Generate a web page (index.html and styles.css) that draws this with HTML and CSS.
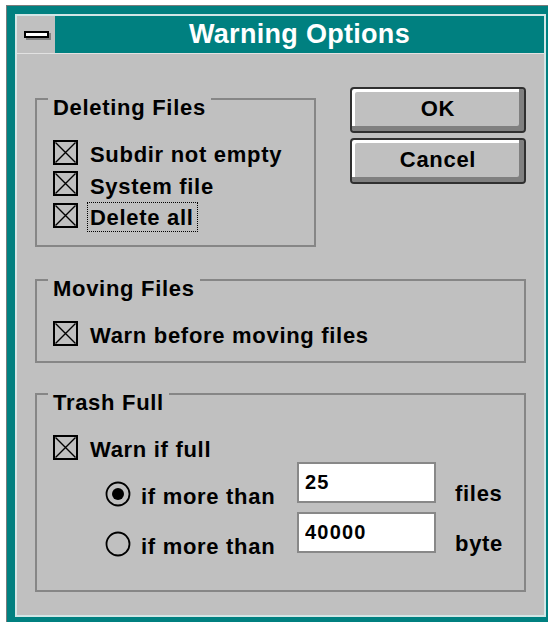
FILE: index.html
```html
<!DOCTYPE html>
<html lang="en">
<head>
<meta charset="utf-8">
<title>Warning Options</title>
<link rel="stylesheet" href="styles.css">
</head>
<body>
<div class="window">
  <div class="frame">
    <div class="titlebar">
      <div class="sysmenu"><span class="sysmenu-bar"></span></div>
      <div class="title">Warning Options</div>
    </div>
    <div class="client">
      <div class="top-row">
        <div class="group group-delete">
          <div class="group-title">Deleting Files</div>
          <div class="checks">
            <div class="check-row">
              <svg class="checkbox" viewBox="0 0 25 25"><rect x="1" y="1" width="23" height="23" fill="none" stroke="#000" stroke-width="2"/><path d="M2.5 2.5L22.5 22.5M22.5 2.5L2.5 22.5" stroke="#000" stroke-width="1.4"/></svg>
              <span class="check-text">Subdir not empty</span>
            </div>
            <div class="check-row">
              <svg class="checkbox" viewBox="0 0 25 25"><rect x="1" y="1" width="23" height="23" fill="none" stroke="#000" stroke-width="2"/><path d="M2.5 2.5L22.5 22.5M22.5 2.5L2.5 22.5" stroke="#000" stroke-width="1.4"/></svg>
              <span class="check-text">System file</span>
            </div>
            <div class="check-row">
              <svg class="checkbox" viewBox="0 0 25 25"><rect x="1" y="1" width="23" height="23" fill="none" stroke="#000" stroke-width="2"/><path d="M2.5 2.5L22.5 22.5M22.5 2.5L2.5 22.5" stroke="#000" stroke-width="1.4"/></svg>
              <span class="check-text"><span class="focus">Delete all</span></span>
            </div>
          </div>
        </div>
        <div class="buttons">
          <div class="btn">OK</div>
          <div class="btn">Cancel</div>
        </div>
      </div>

      <div class="group group-move">
        <div class="group-title">Moving Files</div>
        <div class="checks">
          <div class="check-row">
            <svg class="checkbox" viewBox="0 0 25 25"><rect x="1" y="1" width="23" height="23" fill="none" stroke="#000" stroke-width="2"/><path d="M2.5 2.5L22.5 22.5M22.5 2.5L2.5 22.5" stroke="#000" stroke-width="1.4"/></svg>
            <span class="check-text">Warn before moving files</span>
          </div>
        </div>
      </div>

      <div class="group group-trash">
        <div class="group-title">Trash Full</div>
        <div class="checks">
          <div class="check-row">
            <svg class="checkbox" viewBox="0 0 25 25"><rect x="1" y="1" width="23" height="23" fill="none" stroke="#000" stroke-width="2"/><path d="M2.5 2.5L22.5 22.5M22.5 2.5L2.5 22.5" stroke="#000" stroke-width="1.4"/></svg>
            <span class="check-text">Warn if full</span>
          </div>
        </div>
        <div class="limits">
          <div class="radio-row">
            <svg class="radio" viewBox="0 0 26 26"><circle cx="13" cy="13" r="11.5" fill="none" stroke="#000" stroke-width="1.8"/><circle cx="13" cy="13" r="6" fill="#000"/></svg>
            <span class="radio-label">if more than</span>
            <input class="field" type="text" value="25">
            <span class="unit">files</span>
          </div>
          <div class="radio-row">
            <svg class="radio" viewBox="0 0 26 26"><circle cx="13" cy="13" r="11.5" fill="none" stroke="#000" stroke-width="1.8"/></svg>
            <span class="radio-label">if more than</span>
            <input class="field" type="text" value="40000">
            <span class="unit">byte</span>
          </div>
        </div>
      </div>
    </div>
  </div>
</div>
</body>
</html>
```

FILE: styles.css
```css
* {
  box-sizing: border-box;
}

html,
body {
  margin: 0;
  padding: 0;
  background: #fff;
  overflow: hidden;
}

body {
  font-family: "Liberation Sans", Arial, sans-serif;
  font-weight: bold;
  font-size: 22px;
  letter-spacing: 0.7px;
  color: #000;
}

/* window frame */
.window {
  margin: 5px 0 0 6px;
  width: 548px;
  border-top: 1px solid #7b7b7b;
  border-left: 1px solid #7b7b7b;
  background: #008080;
  padding: 8px;
}

.frame {
  border: 2px solid #d2e6e6;
}

.titlebar {
  display: flex;
  height: 38px;
  border-bottom: 1px solid #e2e2e2;
  background: #008080;
}

.sysmenu {
  width: 38px;
  background: #c0c0c0;
  display: flex;
  align-items: center;
  justify-content: center;
}

.sysmenu-bar {
  width: 25px;
  height: 7px;
  border: 2px solid #000;
  background: #fff;
  box-shadow: 2px 2px 0 #808080;
}

.title {
  flex: 1;
  text-align: center;
  color: #fff;
  font-size: 27px;
  line-height: 37px;
  letter-spacing: 0.3px;
}

/* dialog body */
.client {
  height: 561px;
  background: #c0c0c0;
  padding: 33px 18px 0 18px;
}

.top-row {
  display: flex;
  align-items: flex-start;
}

.group {
  border: 2px solid #868686;
}

.group-title {
  width: fit-content;
  margin: -5px 0 0 11px;
  padding: 0 5px;
  background: #c0c0c0;
  line-height: 26px;
}

.group-delete {
  width: 281px;
  height: 149px;
  margin-top: 11px;
}

.group-move {
  height: 84px;
  margin-top: 32px;
}

.group-trash {
  height: 199px;
  margin-top: 30px;
}

.checks {
  margin: 15.25px 0 0 16px;
}

.check-row {
  display: flex;
  align-items: center;
  gap: 12px;
  height: 31.5px;
}

.checkbox {
  width: 25px;
  height: 25px;
  flex: none;
}

.check-text {
  padding-top: 6px;
  line-height: 26px;
}

.focus {
  outline: 1px dotted #000;
  padding: 2px 3px 1px 2px;
  margin-left: -2px;
}

/* buttons */
.buttons {
  margin-left: auto;
  width: 176px;
  display: flex;
  flex-direction: column;
  gap: 5px;
}

.btn {
  height: 46px;
  border: 2px solid #303030;
  border-radius: 4px;
  background: #c0c0c0;
  box-shadow: inset -5px -5px 0 #808080, inset 3px 3px 0 #fff;
  display: flex;
  align-items: center;
  justify-content: center;
  padding-bottom: 2px;
}

/* trash limits */
.limits {
  margin-top: 6.25px;
}

.radio-row {
  display: flex;
  align-items: center;
  height: 50px;
  margin-left: 68px;
}

.radio {
  width: 26px;
  height: 26px;
  flex: none;
}

.radio-label {
  margin-left: 10px;
  width: 156px;
  padding-top: 6px;
  line-height: 26px;
}

.field {
  width: 139px;
  height: 41px;
  margin: 0 0 24px 0;
  border: 2px solid #888;
  background: #fff;
  padding: 0 0 0 6px;
  font-family: inherit;
  font-weight: bold;
  font-size: 20px;
  letter-spacing: 1.2px;
  color: #000;
  outline: none;
}

.unit {
  margin-left: 19px;
  line-height: 26px;
}
```
